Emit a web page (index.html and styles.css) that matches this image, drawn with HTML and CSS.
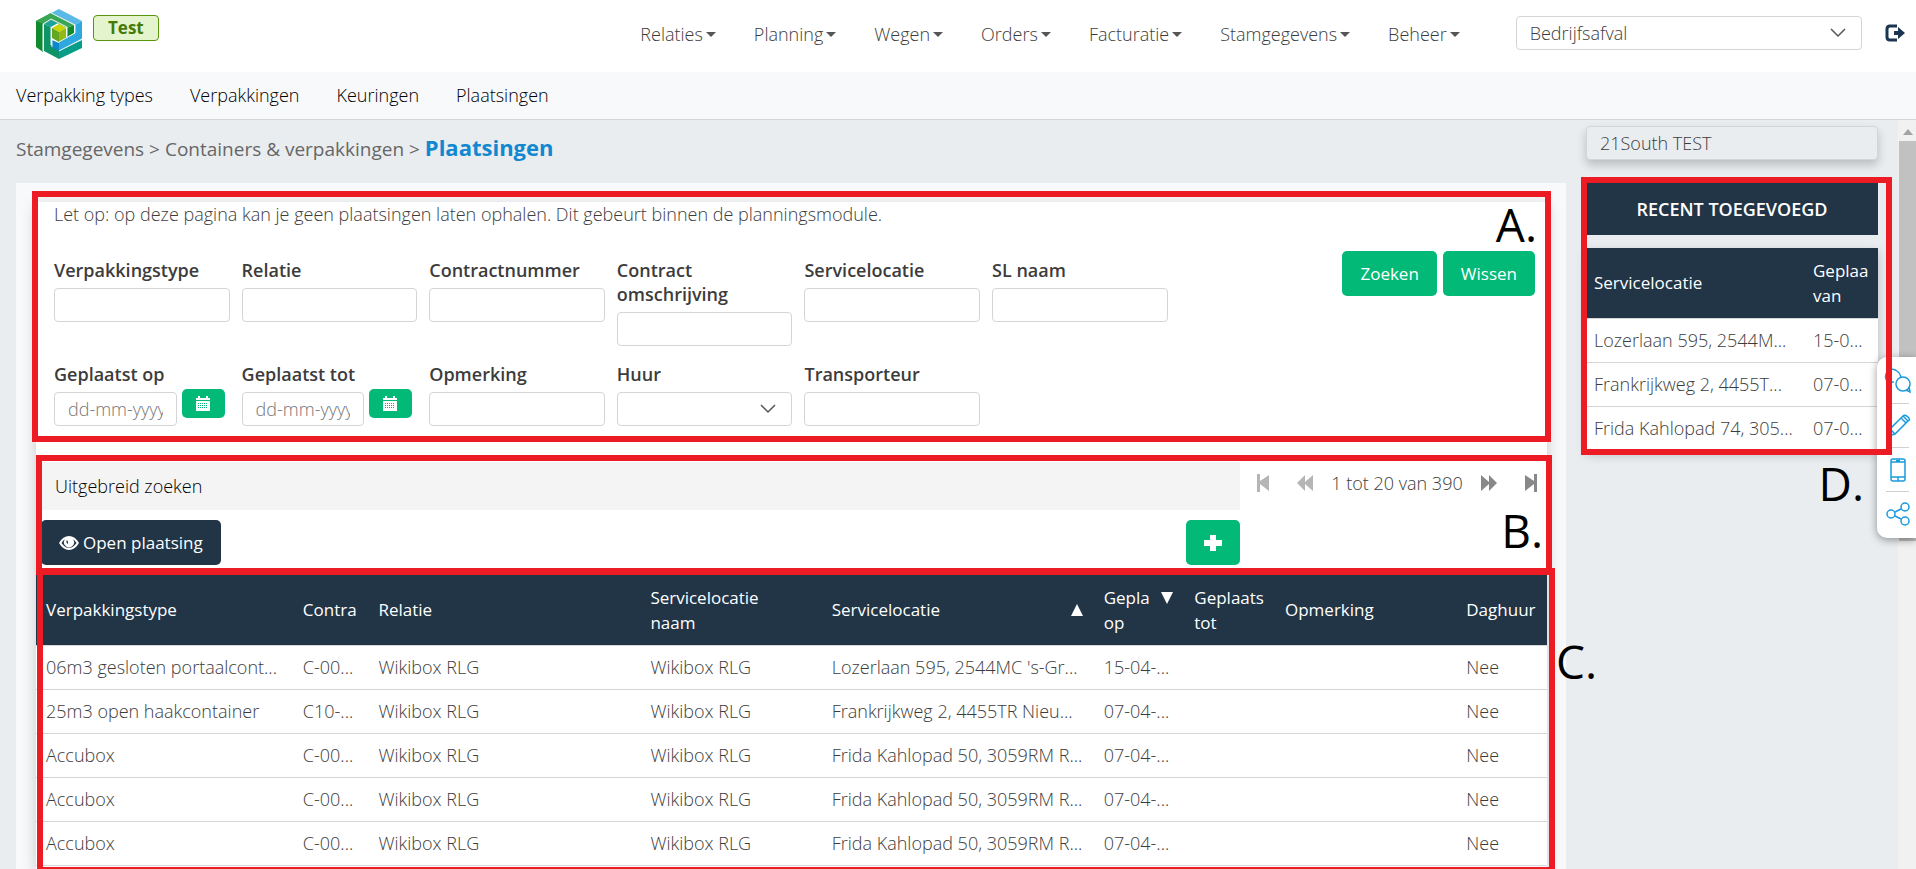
FILE: index.html
```html
<!DOCTYPE html>
<html lang="nl">
<head>
<meta charset="utf-8">
<title>Plaatsingen</title>
<link rel="stylesheet" href="styles.css">
</head>
<body>
<header class="topbar">
  <div class="brand">
    <svg class="logo" viewBox="0 0 46 50" aria-hidden="true">
      <path fill="#5cb8e6" d="M23 0 46 12 39 16 15 4z"/>
      <path fill="#2fa8df" d="M46 12V30L23 42V32L39 24V16z"/>
      <path fill="#3aa655" d="M0 12 15 4 38 16 31 19 15 11 7 15z"/>
      <path fill="#0f8a2f" d="M0 12 15 11 7 15V43L0 38z"/>
      <path fill="#3aa655" d="M0 12 15 4 20 7 7 15z"/>
      <path fill="#0f8a2f" d="M31 19 38 16V24L31 28z"/>
      <path fill="#1fa19b" d="M8 15 15 11 22 14 15 18z"/>
      <path fill="#0f9468" d="M8 15 15 18V36L23 40V50L8 42z"/>
      <path fill="#069e88" d="M23 42 46 31V39L23 50z"/>
      <path fill="#0f86d0" d="M16 31 23 34V42L16 38z"/>
      <path fill="#c9d400" d="M16 19 23 15 30 19 23 23z"/>
      <path fill="#63a820" d="M16 19 23 23V33L16 29z"/>
      <path fill="#93b81a" d="M23 23 30 19V29L23 33z"/>
      <path fill="none" stroke="#e8f6f2" d="M7 42V15L15 10 31 18V27M15 36V18M16 30V38M39 16V24L23 33M23 42 46 30M15 4 39 16"/>
    </svg>
    <span class="env">Test</span>
  </div>
  <nav class="mainnav" aria-label="Hoofdmenu">
    <a href="#">Relaties</a>
    <a href="#">Planning</a>
    <a href="#">Wegen</a>
    <a href="#">Orders</a>
    <a href="#">Facturatie</a>
    <a href="#">Stamgegevens</a>
    <a href="#">Beheer</a>
  </nav>
  <div class="pick topbar-pick">
    <select class="control" aria-label="Afdeling"><option>Bedrijfsafval</option></select>
    <svg class="chevron" viewBox="0 0 16 10" aria-hidden="true"><path d="M1 1 8 8 15 1"/></svg>
  </div>
  <button class="logout" aria-label="Uitloggen">
    <svg viewBox="0 0 20 18" aria-hidden="true"><path fill="none" stroke="#1b3450" stroke-width="3" d="M12 2H5Q2 2 2 5V13Q2 16 5 16H12"/><path fill="#1b3450" d="M9 7H13V3L20 9 13 15V11H9z"/></svg>
  </button>
</header>
<nav class="subnav" aria-label="Submenu">
  <a href="#">Verpakking types</a>
  <a href="#">Verpakkingen</a>
  <a href="#">Keuringen</a>
  <a href="#">Plaatsingen</a>
</nav>
<div class="page">
  <main class="content">
    <div class="crumbs">Stamgegevens &gt; Containers &amp; verpakkingen &gt; <h1>Plaatsingen</h1></div>
    <div class="panel">
      <div class="card">
        <section class="search marked mark-a">
          <p class="notice">Let op: op deze pagina kan je geen plaatsingen laten ophalen. Dit gebeurt binnen de planningsmodule.</p>
          <form class="form">
            <div class="fields">
              <div class="field"><label for="f1">Verpakkingstype</label><input class="control" id="f1"></div>
              <div class="field"><label for="f2">Relatie</label><input class="control" id="f2"></div>
              <div class="field"><label for="f3">Contractnummer</label><input class="control" id="f3"></div>
              <div class="field"><label for="f4">Contract omschrijving</label><input class="control" id="f4"></div>
              <div class="field"><label for="f5">Servicelocatie</label><input class="control" id="f5"></div>
              <div class="field"><label for="f6">SL naam</label><input class="control" id="f6"></div>
              <div class="field"><label for="f7">Geplaatst op</label>
                <div class="date"><input class="control" id="f7" placeholder="dd-mm-yyyy"><button type="button" class="btn cal" aria-label="Kies datum"><svg viewBox="0 0 14 15" aria-hidden="true"><path fill="#fff" d="M0 2H2V0H4V2H10V0H12V2H14V4H0zM0 5H14V15H0z"/><path stroke="#03b978" stroke-dasharray="1 1" d="M2 7.5H12M2 9.5H12M2 11.5H12"/></svg></button></div></div>
              <div class="field"><label for="f8">Geplaatst tot</label>
                <div class="date"><input class="control" id="f8" placeholder="dd-mm-yyyy"><button type="button" class="btn cal" aria-label="Kies datum"><svg viewBox="0 0 14 15" aria-hidden="true"><path fill="#fff" d="M0 2H2V0H4V2H10V0H12V2H14V4H0zM0 5H14V15H0z"/><path stroke="#03b978" stroke-dasharray="1 1" d="M2 7.5H12M2 9.5H12M2 11.5H12"/></svg></button></div></div>
              <div class="field"><label for="f9">Opmerking</label><input class="control" id="f9"></div>
              <div class="field"><label for="f10">Huur</label>
                <div class="pick"><select class="control" id="f10"><option></option></select><svg class="chevron" viewBox="0 0 16 10" aria-hidden="true"><path d="M1 1 8 8 15 1"/></svg></div></div>
              <div class="field"><label for="f11">Transporteur</label><input class="control" id="f11"></div>
            </div>
            <div class="actions"><button type="button" class="btn">Zoeken</button><button type="button" class="btn">Wissen</button></div>
          </form>
          <span class="letter">A.</span>
        </section>
        <section class="tools marked mark-b">
          <div class="tools-main">
            <button type="button" class="extended">Uitgebreid zoeken</button>
            <div class="tools-row">
              <button type="button" class="btn dark"><svg class="eye" viewBox="0 0 20 14" aria-hidden="true"><path fill="#fff" fill-rule="evenodd" d="M0 7Q4 0 10 0T20 7Q16 14 10 14T0 7zM2.500 7Q6 12 10 12T17.500 7Q16 4.500 14 3.200A5 5 0 1 1 6 3.200Q4 4.500 2.500 7zM8 4A2.500 2.500 0 0 0 9 8V6Z"/></svg>Open plaatsing</button>
              <button type="button" class="btn add" aria-label="Toevoegen"><svg viewBox="0 0 18 18" aria-hidden="true"><path fill="#fff" d="M6 1H12V6H18V12H12V17H6V12H0V6H6z"/></svg></button>
            </div>
          </div>
          <div class="pager">
            <button type="button" class="off" aria-label="Eerste"><svg viewBox="0 0 12 18"><path d="M0 0H3V7L12 1V17L3 10V18H0z"/></svg></button>
            <div class="pager-mid">
              <button type="button" class="off" aria-label="Vorige"><svg viewBox="0 0 16 18"><path d="M0 9 8 1V8L16 1V17L8 10V17z"/></svg></button>
              <span>1 tot 20 van 390</span>
              <button type="button" aria-label="Volgende"><svg viewBox="0 0 16 18"><path d="M16 9 8 1V8L0 1V17L8 10V17z"/></svg></button>
            </div>
            <button type="button" aria-label="Laatste"><svg viewBox="0 0 12 18"><path d="M12 0H9V7L0 1V17L9 10V18H12z"/></svg></button>
          </div>
          <span class="letter">B.</span>
        </section>
        <section class="results marked mark-c">
          <table class="grid">
            <colgroup><col class="w-type"><col class="w-contract"><col class="w-rel"><col class="w-name"><col class="w-loc"><col class="w-date"><col class="w-date"><col class="w-name"><col class="w-date"></colgroup>
            <thead><tr>
              <th>Verpakkingstype</th><th>Contra</th><th>Relatie</th><th>Servicelocatie<br>naam</th>
              <th><div class="sort"><span>Servicelocatie</span><svg viewBox="0 0 14 14"><path fill="#fff" d="M7 1 13 13H1z"/></svg></div></th>
              <th><div class="sort top"><span>Gepla<br>op</span><svg viewBox="0 0 14 14"><path fill="#fff" d="M7 13 13 1H1z"/></svg></div></th>
              <th>Geplaats<br>tot</th><th>Opmerking</th><th>Daghuur</th>
            </tr></thead>
            <tbody>
              <tr><td>06m3 gesloten portaalcont...</td><td>C-00...</td><td>Wikibox RLG</td><td>Wikibox RLG</td><td>Lozerlaan 595, 2544MC 's-Gr...</td><td>15-04-...</td><td></td><td></td><td>Nee</td></tr>
              <tr><td>25m3 open haakcontainer</td><td>C10-...</td><td>Wikibox RLG</td><td>Wikibox RLG</td><td>Frankrijkweg 2, 4455TR Nieu...</td><td>07-04-...</td><td></td><td></td><td>Nee</td></tr>
              <tr><td>Accubox</td><td>C-00...</td><td>Wikibox RLG</td><td>Wikibox RLG</td><td>Frida Kahlopad 50, 3059RM R...</td><td>07-04-...</td><td></td><td></td><td>Nee</td></tr>
              <tr><td>Accubox</td><td>C-00...</td><td>Wikibox RLG</td><td>Wikibox RLG</td><td>Frida Kahlopad 50, 3059RM R...</td><td>07-04-...</td><td></td><td></td><td>Nee</td></tr>
              <tr><td>Accubox</td><td>C-00...</td><td>Wikibox RLG</td><td>Wikibox RLG</td><td>Frida Kahlopad 50, 3059RM R...</td><td>07-04-...</td><td></td><td></td><td>Nee</td></tr>
            </tbody>
          </table>
          <span class="letter">C.</span>
        </section>
      </div>
    </div>
  </main>
  <aside class="side">
    <input class="control company" value="21South TEST" aria-label="Bedrijf" readonly>
    <section class="recent marked mark-d">
      <h2>Recent toegevoegd</h2>
      <table class="grid">
        <colgroup><col><col class="w-recent"></colgroup>
        <thead><tr><th>Servicelocatie</th><th>Geplaa<br>van</th></tr></thead>
        <tbody>
          <tr><td>Lozerlaan 595, 2544M...</td><td>15-0...</td></tr>
          <tr><td>Frankrijkweg 2, 4455T...</td><td>07-0...</td></tr>
          <tr><td>Frida Kahlopad 74, 305...</td><td>07-0...</td></tr>
        </tbody>
      </table>
      <span class="letter">D.</span>
    </section>
  </aside>
  <div class="scrollbar" aria-hidden="true"><svg viewBox="0 0 10 6"><path fill="#a3a3a3" d="M5 0 10 6H0z"/></svg><div class="thumb"></div></div>
</div>
<div class="dock">
  <a href="#" aria-label="Chat"><svg viewBox="0 0 24 24"><path d="M4 13 1 16V12Q-2 8 1 3Q6-2 11 2Q14 4 15 8"/><path d="M4 13H8"/><circle cx="17" cy="15" r="7"/><path d="M20 21 24 23 23 18"/></svg></a>
  <a href="#" aria-label="Bewerken"><svg viewBox="0 0 24 24"><path d="M2 22 4 15 17 2Q19 0 22 3T22 7L9 20zM15 4 20 9M17 2 22 7M4 15 9 20"/></svg></a>
  <a href="#" aria-label="Telefoon"><svg viewBox="0 0 24 24"><rect x="5" y="1" width="14" height="22" rx="2"/><path d="M5 4H19M5 19H19M10 2.500H14M12 19V23"/></svg></a>
  <a href="#" aria-label="Delen"><svg viewBox="0 0 24 24"><circle cx="5" cy="12" r="4"/><circle cx="19" cy="5" r="4"/><circle cx="19" cy="19" r="4"/><path d="M9 10 15 7M9 14 15 17"/></svg></a>
</div>
</body>
</html>
```
FILE: styles.css
```css
* { box-sizing: border-box; }
body {
  margin: 0;
  height: 100vh;
  display: flex;
  flex-direction: column;
  overflow: hidden;
  font: 300 18px/24px "Open Sans", sans-serif;
  color: #3c3c3c;
  background: #e9edf0;
}
button, input, select { font: inherit; color: inherit; }
button { border: 0; cursor: pointer; }
a { color: inherit; text-decoration: none; }
svg { display: block; }
h1, h2, p { margin: 0; }

.topbar {
  display: flex;
  align-items: center;
  height: 72px;
  padding: 0 8px 6px 36px;
  background: #fff;
}
.brand { display: flex; gap: 11px; margin-right: auto; align-items: flex-start; padding-top: 2px; }
.logo { width: 46px; height: 50px; }
.env {
  margin-top: 6px;
  padding: 0 14px;
  border: 1px solid #5a960a;
  border-radius: 4px;
  background: #e4f4cd;
  color: #457a08;
  font-size: 17px;
  font-weight: 700;
}
.mainnav { display: flex; gap: 38px; padding-top: 2px; }
.mainnav a { display: flex; align-items: center; gap: 3px; }
.mainnav a::after { content: ""; border: 5px solid transparent; border-top-color: #555; border-bottom: 0; }
.control {
  display: block;
  width: 100%;
  height: 34px;
  padding: 0 13px;
  border: 1px solid #d5d5d5;
  border-radius: 4px;
  background: #fff;
}
.pick { position: relative; }
.pick select { appearance: none; }
.chevron {
  position: absolute;
  right: 16px;
  top: 12px;
  width: 16px;
  height: 10px;
  fill: none;
  stroke: #555;
  stroke-width: 1.5;
  pointer-events: none;
}
.topbar-pick { width: 18.5%; margin: 0 20px 0 56px; }
.logout { padding: 0; width: 26px; background: none; }
.logout svg { width: 20px; height: 18px; margin-left: 3px; }

.subnav {
  display: flex;
  gap: 37px;
  padding: 11px 16px;
  height: 48px;
  background: #f8f9fb;
  border-bottom: 1px solid #d5d6d8;
  color: #000;
}

.page { flex: 1; min-height: 0; display: flex; padding-left: 16px; }
.content { flex: 1; min-width: 0; display: flex; flex-direction: column; }
.crumbs { height: 63px; padding-top: 11px; font-size: 19px; font-weight: 400; line-height: 32px; color: #666; }
.crumbs h1 { display: inline; font-size: 22px; font-weight: 700; color: #1188cf; }
.panel { flex: 1; padding: 19px 19px 0 20px; background: #f7f9fb; }
.card { height: 100%; background: #fff; box-shadow: 0 4px 14px rgba(0, 0, 0, .2); display: flex; flex-direction: column; }

.marked { position: relative; }
.marked::after {
  content: "";
  position: absolute;
  border: 6px solid #ed1c24;
  pointer-events: none;
  z-index: 5;
}
.mark-a::after { inset: -11px -4px -16px -4px; }
.mark-b::after { inset: -7px -5px 0 0; }
.mark-c::after { inset: -7px -8px -4px 1px; }
.mark-d::after { inset: -6px -14px -4px -5px; }
.letter {
  position: absolute;
  z-index: 6;
  font-size: 46px;
  font-weight: 400;
  line-height: 56px;
  color: #000;
}
.mark-a .letter { top: -6px; right: 10px; }
.mark-b .letter { top: 40px; right: 4px; }
.mark-c .letter { top: 58px; right: -50px; }
.mark-d .letter { top: 272px; right: 14px; }

.search { padding: 0 12px 0 18px; }
.form { display: flex; margin-top: 32px; }
.fields { flex: 0 0 75.2%; display: grid; grid-template-columns: repeat(6, minmax(0, 1fr)); gap: 16px 12px; }
.field label { display: block; margin-bottom: 6px; font-weight: 600; }
.date { display: flex; gap: 5px; align-items: flex-start; margin-right: 5px; }
.date .control { flex: 1; min-width: 0; }
.control::placeholder { color: #777; }
.btn {
  height: 45px;
  padding: 0 18px;
  border-radius: 5px;
  background: #03b978;
  color: #fff;
  font-size: 17px;
  font-weight: 400;
}
.cal { margin-top: -3px; height: 29px; width: 43px; padding: 0 14px; }
.cal svg { width: 14px; height: 15px; }
.actions { flex: 1; display: flex; justify-content: flex-end; align-items: flex-start; gap: 6px; margin-top: -7px; }

.tools { display: flex; margin-top: 36px; height: 113px; }
.tools-main { flex: 1; }
.extended { display: block; width: 100%; height: 48px; padding: 0 19px; text-align: left; background: #f4f4f4; color: #000; }
.tools-row { display: flex; justify-content: space-between; padding: 10px 0 0 5px; }
.dark { display: flex; align-items: center; gap: 4px; background: #213547; }
.eye { width: 20px; height: 14px; }
.add svg { width: 18px; height: 18px; }
.pager { flex: 0 0 307px; height: 42px; padding: 0 10px 0 17px; display: flex; justify-content: space-between; align-items: center; }
.pager-mid { display: flex; align-items: center; gap: 18px; }
.pager button { padding: 0; background: none; }
.pager svg { height: 18px; fill: #888; }
.pager .off svg { fill: #b5b5b5; }

.results { flex: 1; }
.grid { width: 100%; table-layout: fixed; border-collapse: collapse; background: #fff; }
.grid th {
  height: 70px;
  padding: 0 10px;
  background: #213547;
  color: #fff;
  font-size: 17px;
  font-weight: 400;
  line-height: 25px;
  text-align: left;
}
.grid td {
  height: 44px;
  padding: 0 10px;
  border-top: 1px solid #d5d6d8;
  border-bottom: 1px solid #d5d6d8;
  white-space: nowrap;
}
.sort { display: flex; align-items: center; gap: 8px; }
.sort span { flex: 1; min-width: 0; }
.sort svg { flex: none; width: 14px; height: 14px; }
.sort.top svg { align-self: flex-start; margin-top: 6px; }
.w-type { width: 17%; }
.w-contract { width: 5%; }
.w-rel, .w-loc { width: 18%; }
.w-name { width: 12%; }
.w-date { width: 6%; }

.side { flex: 0 0 312px; padding: 6px 0 0 20px; margin-right: 20px; }
.company { background: #e9edf0; box-shadow: 0 5px 10px rgba(0, 0, 0, .2); }
.recent { margin-top: 23px; }
.recent h2 { margin-bottom: 13px; padding: 14px; text-align: center; text-transform: uppercase; font-size: 18px; line-height: 24px; font-weight: 600; background: #213547; color: #fff; }
.recent .grid { box-shadow: 0 4px 10px rgba(0, 0, 0, .2); }
.recent th, .recent td { padding: 0 8px; }
.w-recent { width: 25%; }

.scrollbar { flex: 0 0 18px; padding: 9px 0 0 1px; background: #f1f1f1; }
.scrollbar svg { width: 10px; height: 6px; margin: 0 auto 6px; }
.thumb { height: 400px; background: #c1c1c1; }

.dock {
  position: absolute;
  right: 0;
  top: 357px;
  width: 39px;
  padding: 2px 7px 3px 9px;
  border-radius: 10px 0 0 10px;
  background: #fff;
  box-shadow: 0 2px 8px rgba(0, 0, 0, .4);
}
.dock a { display: grid; place-items: center; height: 44px; }
.dock a + a { border-top: 1px solid #d0d0d0; }
.dock svg { width: 24px; height: 24px; fill: none; stroke: #1a9bdc; stroke-width: 1.5; overflow: visible; }
```
